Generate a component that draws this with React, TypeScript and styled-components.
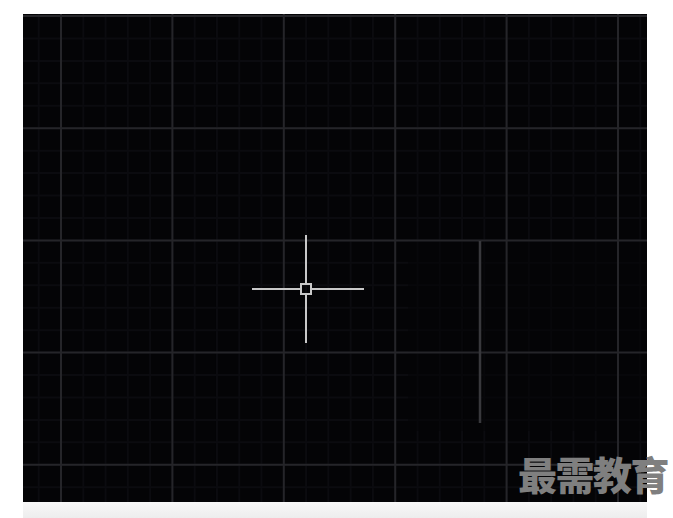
import React from "react";
import styled, { createGlobalStyle } from "styled-components";

const Global = createGlobalStyle`
  html, body { margin: 0; padding: 0; background: #ffffff; }
  body { width: 673px; height: 518px; overflow: hidden; font-family: "Noto Sans CJK SC", "Noto Sans", sans-serif; }
`;

const Page = styled.div`
  position: relative;
  width: 673px;
  height: 518px;
  box-sizing: border-box;
  padding: 14px 0 0 23px;
  display: flex;
  flex-direction: column;
`;

const Stage = styled.div`
  width: 624px;
  display: flex;
  flex-direction: column;
`;

const Canvas = styled.div`
  height: 488px;
  background: #040406;
  overflow: hidden;
`;

const Strip = styled.div`
  height: 16px;
  background: linear-gradient(#f8f8f8, #ededed);
`;

const Watermark = styled.div`
  position: absolute;
  right: 5px;
  top: 452px;
  font-family: "Noto Sans CJK SC", sans-serif;
  font-weight: 900;
  font-size: 39px;
  line-height: 1.1;
  letter-spacing: -1.5px;
  color: #7f7f7f;
`;

const W = 624;
const H = 488;
const STEP_X = 111.4;
const STEP_Y = 112.2;
const X0 = 38;
const Y0 = 2;

function range(start: number, step: number, max: number) {
  const out: number[] = [];
  let s = start;
  while (s - step > -step) s -= step;
  for (let v = s; v <= max; v += step) if (v >= 0) out.push(v);
  return out;
}

const Grid: React.FC = () => {
  const minorX = range(X0, STEP_X / 5, W);
  const minorY = range(Y0, STEP_Y / 5, H);
  const majorX = range(X0, STEP_X, W);
  const majorY = range(Y0, STEP_Y, H);
  return (
    <svg width={W} height={H} viewBox={`0 0 ${W} ${H}`} style={{ display: "block" }}>
      {minorX.map((x, i) => (
        <line key={`mx${i}`} x1={x} y1={0} x2={x} y2={H} stroke="#0b0b0f" strokeWidth={2} />
      ))}
      {minorY.map((y, i) => (
        <line key={`my${i}`} x1={0} y1={y} x2={W} y2={y} stroke="#0b0b0f" strokeWidth={2} />
      ))}
      <rect x={385} y={227} width={239} height={190} fill="#030305" opacity={0.5} />
      {majorX.map((x, i) => (
        <line key={`Mx${i}`} x1={x} y1={0} x2={x} y2={H} stroke="#252529" strokeWidth={2} />
      ))}
      {majorY.map((y, i) => (
        <line key={`My${i}`} x1={0} y1={y} x2={W} y2={y} stroke="#252529" strokeWidth={2} />
      ))}
      <line x1={457} y1={227} x2={457} y2={409} stroke="#38383c" strokeWidth={2.5} />
      <g stroke="#c8c8c8" strokeWidth={2} fill="none">
        <line x1={229} y1={275} x2={277.5} y2={275} />
        <line x1={288.5} y1={275} x2={341} y2={275} />
        <line x1={283} y1={221} x2={283} y2={269.5} />
        <line x1={283} y1={280.5} x2={283} y2={329} />
        <rect x={278} y={270} width={10} height={10} />
      </g>
    </svg>
  );
};

export default function App() {
  return (
    <>
      <Global />
      <Page>
        <Stage>
          <Canvas>
            <Grid />
          </Canvas>
          <Strip />
        </Stage>
        <Watermark>最需教育</Watermark>
      </Page>
    </>
  );
}
